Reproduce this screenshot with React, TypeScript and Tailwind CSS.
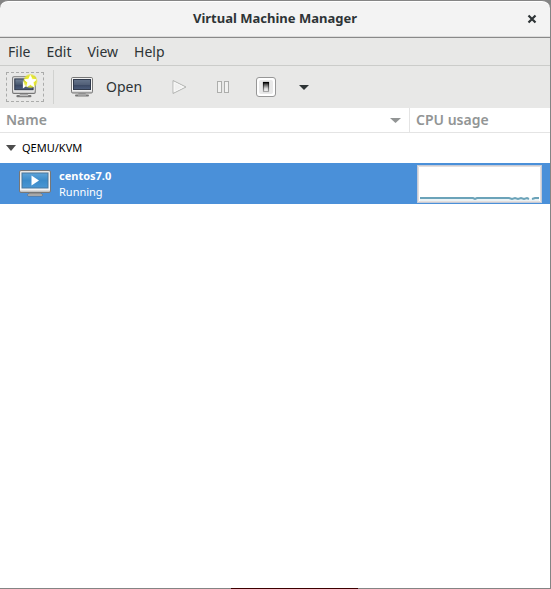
import React from "react";

const menus = ["File", "Edit", "View", "Help"];

function Screen({ id, from, to }: { id: string; from: string; to: string }) {
  return (
    <>
      <defs>
        <linearGradient id={id} x1="0" y1="0" x2="0" y2="1">
          <stop offset="0" stopColor={from} />
          <stop offset="0.5" stopColor={to} />
          <stop offset="0.6" stopColor="#3d4b66" />
          <stop offset="1" stopColor="#4c5d7c" />
        </linearGradient>
        <linearGradient id={id + "-case"} x1="0" y1="0" x2="0" y2="1">
          <stop offset="0" stopColor="#eeeeee" />
          <stop offset="0.8" stopColor="#ffffff" />
          <stop offset="1" stopColor="#b8b8b8" />
        </linearGradient>
      </defs>
      <path d="M8.5 18h7l.8 2h-8.600z" fill="#a9a9a9" />
      <rect x="5" y="19.500" width="14" height="2" rx="1" fill="#777" />
      <rect x="8" y="19.500" width="8" height="1" fill="#c4c4c4" />
      <rect x="1.500" y="2.500" width="21" height="15.500" rx="1.200" fill={`url(#${id}-case)`} stroke="#777" />
      <rect x="3.500" y="4.500" width="17" height="10" fill={`url(#${id})`} stroke="#303a4c" />
    </>
  );
}

function NewMachineIcon() {
  return (
    <svg width="28" height="26" viewBox="0 0 26 24" aria-hidden="true">
      <defs>
        <radialGradient id="glow">
          <stop offset="0.5" stopColor="#eeee18" />
          <stop offset="0.8" stopColor="#e4e638" stopOpacity="0.85" />
          <stop offset="1" stopColor="#e4e638" stopOpacity="0" />
        </radialGradient>
      </defs>
      <Screen id="new" from="#77869a" to="#4b5c72" />
      <path d="M11 6.500v7l5-3.500z" fill="#fff" />
      <circle cx="18" cy="6.500" r="7" fill="url(#glow)" />
      <path d="M18 1.300l1.600 3.500 3.700.4-2.800 2.600.8 3.900-3.300-2-3.300 2 .8-3.900-2.800-2.600 3.700-.4z" fill="#fff" stroke="#fff" strokeWidth=".8" />
    </svg>
  );
}

function OpenIcon() {
  return (
    <svg width="24" height="24" viewBox="0 0 24 24" aria-hidden="true">
      <Screen id="open" from="#66758c" to="#526078" />
    </svg>
  );
}

function RunIcon() {
  return (
    <svg width="16" height="16" viewBox="0 0 16 16" fill="#f0f0ef" stroke="#b3b4b2" aria-hidden="true">
      <path d="M2 1.500v13L15 8z" />
      <path d="M3.200 3.400v9.200L12.500 8z" stroke="#f8f8f8" />
    </svg>
  );
}

function PauseIcon() {
  return (
    <svg width="16" height="16" viewBox="0 0 16 16" fill="#f2f2f1" stroke="#adaeac" aria-hidden="true">
      <rect x="2.500" y="2.500" width="4" height="11" />
      <rect x="9.500" y="2.500" width="4" height="11" />
    </svg>
  );
}

function PowerIcon() {
  return (
    <svg width="22" height="22" viewBox="0 0 22 22" aria-hidden="true">
      <defs>
        <linearGradient id="switch" x1="0" y1="0" x2="0" y2="1">
          <stop offset="0" stopColor="#000" />
          <stop offset="0.15" stopColor="#444" />
          <stop offset="0.65" stopColor="#d8d8d8" />
          <stop offset="1" stopColor="#fff" />
        </linearGradient>
        <linearGradient id="switch-edge" x1="0" y1="0" x2="0" y2="1">
          <stop offset="0" stopColor="#000" />
          <stop offset="1" stopColor="#a5a5a5" />
        </linearGradient>
      </defs>
      <rect x="1.500" y="1.500" width="19" height="19" rx="2.500" fill="#fff" stroke="#979797" />
      <rect x="4" y="4" width="14" height="14" rx="2" fill="#e9e9e9" />
      <rect x="8.500" y="6.500" width="5" height="9" fill="url(#switch)" stroke="url(#switch-edge)" strokeWidth="1.200" />
    </svg>
  );
}

function RunningIcon() {
  return (
    <svg width="32" height="27" viewBox="0 1 32 27" aria-hidden="true">
      <defs>
        <linearGradient id="live" x1="0" y1="0" x2="0" y2="1">
          <stop offset="0" stopColor="#5da3d8" />
          <stop offset="0.5" stopColor="#3c8bc9" />
          <stop offset="1" stopColor="#4a97d4" />
        </linearGradient>
        <linearGradient id="live-case" x1="0" y1="0" x2="0" y2="1">
          <stop offset="0" stopColor="#e9e7e4" />
          <stop offset="0.85" stopColor="#fafafa" />
          <stop offset="1" stopColor="#aaa" />
        </linearGradient>
      </defs>
      <path d="M11 23h10l1 2H10z" fill="#aaa" />
      <rect x="8.500" y="25" width="15" height="2" rx="1" fill="#ccc" stroke="#666" strokeWidth=".7" />
      <rect x=".5" y="1.500" width="31" height="22" rx="1.500" fill="url(#live-case)" stroke="#777" />
      <rect x="3" y="4" width="26" height="15" fill="url(#live)" stroke="#49779c" />
      <path d="M12.500 6.500v10l7.500-5z" fill="#fff" />
    </svg>
  );
}

function CpuGraph() {
  return (
    <svg className="block h-[38px] w-[125px] border border-[#c5cbd8] bg-white" viewBox="0 0 123 36" role="img" aria-label="CPU usage history">
      <path d="M.5 .5h122v35H.5z" fill="none" stroke="#e6dfdc" />
      <path d="M2 34h119" stroke="#d5e6ec" />
      <path d="M2 32h53l2 1 2-1h32l3 1 3-1 3 1 3-1 3 1 3-1 2 1M114 33l3-1h4" fill="none" stroke="#6ba3b9" strokeWidth="2" />
    </svg>
  );
}

export default function App() {
  return (
    <div className="flex min-h-screen flex-col bg-[#848484] pr-px font-['Noto_Sans','Open_Sans',sans-serif] text-[#2e3436]">
      <header className="grid h-[38px] shrink-0 grid-cols-[36px_1fr_36px] items-center rounded-t-lg border-t border-b border-t-[#858585] border-b-[#898989] bg-[#f3f3f3] shadow-[inset_0_1px_0_#ffffff,inset_0_-1px_0_#dcdcdc]">
        <h1 className="col-start-2 text-center text-[13px] font-bold">Virtual Machine Manager</h1>
        <button aria-label="Close" className="flex h-full items-center justify-center">
          <svg width="10" height="10" viewBox="0 0 10 10" stroke="#2e3436" strokeWidth="2.200" aria-hidden="true">
            <path d="M1.500 1.500l7 7M8.500 1.500l-7 7" />
          </svg>
        </button>
      </header>

      <nav className="flex h-7 shrink-0 items-center gap-4 border-b border-[#cbccca] bg-[#e8e8e7] px-2">
        {menus.map((name) => (
          <button key={name} className="text-sm">{name}</button>
        ))}
      </nav>

      <div role="toolbar" className="flex h-[42px] shrink-0 items-center bg-[#e8e8e7] pl-1.5">
        <button aria-label="New virtual machine" className="flex h-[30px] w-[38px] items-center justify-center border border-dashed border-[#aaabaa]">
          <NewMachineIcon />
        </button>
        <span className="mr-2 ml-[9px] h-[34px] w-px bg-[#d1d2d0]" />
        <button className="flex items-center gap-3 px-2 text-sm">
          <OpenIcon />
          Open
        </button>
        <button aria-label="Run" disabled className="ml-[13px] flex w-8 justify-center"><RunIcon /></button>
        <button aria-label="Pause" disabled className="ml-3 flex w-8 justify-center"><PauseIcon /></button>
        <button aria-label="Shut down" className="ml-[11px] flex w-8 justify-center"><PowerIcon /></button>
        <button aria-label="Shut down options" className="ml-3 flex w-5 justify-center">
          <svg width="10" height="5" viewBox="0 0 10 5" fill="#2e3436" aria-hidden="true"><path d="M0 0h10L5 5z" /></svg>
        </button>
      </div>

      <main className="flex-1 bg-white">
        <table className="w-full table-fixed border-separate border-spacing-0">
          <colgroup>
            <col />
            <col className="w-[140px]" />
          </colgroup>
          <thead>
            <tr className="h-[25px] text-left text-sm leading-5 text-[#929595]">
              <th className="border-r border-b border-[#e4e4e4] p-0 pr-2 pl-1.5 font-semibold">
                <button className="flex w-full items-center justify-between">
                  Name
                  <svg width="11" height="5" viewBox="0 0 11 5" fill="#929595" aria-hidden="true"><path d="M0 0h11L5.500 5z" /></svg>
                </button>
              </th>
              <th className="border-b border-[#e4e4e4] p-0 pl-1.5 font-semibold">CPU usage</th>
            </tr>
          </thead>
          <tbody>
            <tr className="h-[30px]">
              <td colSpan={2} className="p-0 pl-1.5">
                <button aria-expanded="true" className="flex items-center gap-1.5 text-[11px] leading-4 text-black">
                  <svg width="10" height="6" viewBox="0 0 10 6" fill="#4d4d4d" aria-hidden="true"><path d="M0 0h10L5 6z" /></svg>
                  QEMU/KVM
                </button>
              </td>
            </tr>
            <tr className="h-[41px] bg-[#4a90d9] text-white">
              <td className="p-0 pl-[19px]">
                <div className="flex items-center gap-2">
                  <RunningIcon />
                  <div className="text-[11px] leading-4">
                    <div className="font-bold">centos7.0</div>
                    <div>Running</div>
                  </div>
                </div>
              </td>
              <td className="p-0 pl-[7px]">
                <CpuGraph />
              </td>
            </tr>
          </tbody>
        </table>
      </main>
      <div className="flex h-px shrink-0">
        <span className="w-[42%]" />
        <span className="w-[23%] bg-[#3a0000]" />
      </div>
    </div>
  );
}
